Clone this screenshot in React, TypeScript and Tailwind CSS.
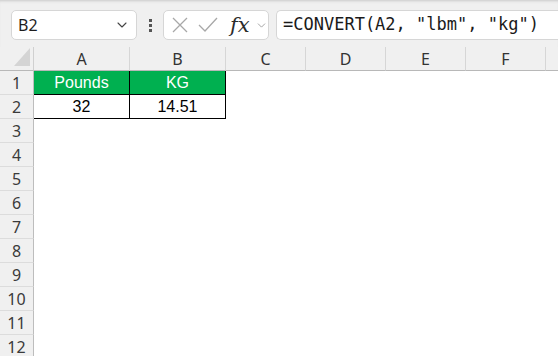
import { ChevronDown } from 'lucide-react';

const cols = ['A', 'B', 'C', 'D', 'E', 'F', 'G'];
const rows = [1, 2, 3, 4, 5, 6, 7, 8, 9, 10, 11, 12];

const uiFont = { fontFamily: '"Noto Sans", "Open Sans", sans-serif' };
const cellFont = { fontFamily: '"Liberation Sans", Arial, sans-serif' };

function Toolbar() {
    return (
        <div className="h-[47px] bg-[#f0f0f0] shadow-[inset_0_3px_3px_-2px_#c8c8c8] flex items-start pt-[10px] pl-[11px]">
            <div className="w-[126px] h-[30px] bg-white border border-[#d6d6d6] rounded-[5px] flex items-center pl-[6px] pr-[6px]">
                <span className="text-[16px] text-[#1e1e1e] flex-1" style={uiFont}>B2</span>
                <ChevronDown size={16} strokeWidth={1.6} className="text-[#444]" />
            </div>
            <div className="w-[26px] h-[30px] flex flex-col items-center justify-center gap-[2px]">
                <span className="w-[3px] h-[3px] bg-[#555]" />
                <span className="w-[3px] h-[3px] bg-[#555]" />
                <span className="w-[3px] h-[3px] bg-[#555]" />
            </div>
            <div className="w-[106px] h-[30px] bg-white border border-[#d6d6d6] rounded-[5px] flex items-center pl-[6px]">
                <svg width="18" height="18" viewBox="0 0 18 18" className="ml-[1px]">
                    <path d="M2 2 L16 16 M16 2 L2 16" stroke="#a8a8a8" strokeWidth="1.3" fill="none" />
                </svg>
                <svg width="20" height="18" viewBox="0 0 20 18" className="ml-[9px]">
                    <path d="M1 9 L7 15 L19 2" stroke="#a8a8a8" strokeWidth="1.3" fill="none" />
                </svg>
                <span
                    className="ml-[12px] text-[21px] italic leading-none text-[#2b2b2b]"
                    style={{ fontFamily: '"DejaVu Serif", "Liberation Serif", serif' }}
                >
                    fx
                </span>
                <ChevronDown size={13} strokeWidth={1.4} className="ml-[5px] text-[#8a8a8a]" />
            </div>
            <div className="ml-[7px] flex-1 h-[30px] bg-white border border-[#d6d6d6] rounded-l-[5px] border-r-0 flex items-center pl-[6px]">
                <span
                    className="text-[17px] text-[#1a1a1a] whitespace-pre"
                    style={{ fontFamily: '"DejaVu Sans Mono", "Liberation Mono", monospace' }}
                >
                    =CONVERT(A2, "lbm", "kg")
                </span>
            </div>
        </div>
    );
}

function Corner() {
    return (
        <div className="bg-[#f0f0f0] border-r border-b border-r-[#d0d0d0] border-b-[#b8b8b8] flex items-end justify-end pr-[3px] pb-[4px]">
            <svg width="16" height="18" viewBox="0 0 16 18">
                <path d="M16 0 L16 18 L0 18 Z" fill="#d4d4d4" />
            </svg>
        </div>
    );
}

export default function App() {
    const data: Record<string, string> = { A1: 'Pounds', B1: 'KG', A2: '32', B2: '14.51' };

    return (
        <div className="w-[558px] h-[356px] overflow-hidden bg-white">
            <Toolbar />
            <div className="grid grid-cols-[34px_96px_96px_80px_80px_80px_80px_80px] grid-rows-[24px] auto-rows-[24px]">
                <Corner />
                {cols.map((c) => (
                    <div
                        key={c}
                        className="bg-[#f0f0f0] border-b border-b-[#b8b8b8] border-r border-r-[#d6d6d6] flex items-center justify-center text-[16px] text-[#333]"
                        style={uiFont}
                    >
                        {/* G sits past the window edge, only its left rule shows */}
                        {c === 'G' ? '' : c}
                    </div>
                ))}
                {rows.map((r) => (
                    <Row key={r} r={r} data={data} />
                ))}
            </div>
        </div>
    );
}

function Row({ r, data }: { r: number; data: Record<string, string> }) {
    return (
        <>
            <div
                className="bg-[#f0f0f0] border-r border-r-[#bdbdbd] border-b border-b-[#dcdcdc] flex items-center justify-center text-[16px] text-[#3a3a3a]"
                style={uiFont}
            >
                {r}
            </div>
            {cols.map((c) => {
                const key = c + r;
                const v = data[key];
                const inTable = (c === 'A' || c === 'B') && r <= 2;
                if (!inTable) return <div key={key} />;
                return (
                    <div
                        key={key}
                        className={
                            'flex items-center justify-center text-[16px] border-r border-b border-black ' +
                            (r === 1 ? 'bg-[#00b050] text-white' : 'bg-white text-black')
                        }
                        style={cellFont}
                    >
                        {v}
                    </div>
                );
            })}
        </>
    );
}
